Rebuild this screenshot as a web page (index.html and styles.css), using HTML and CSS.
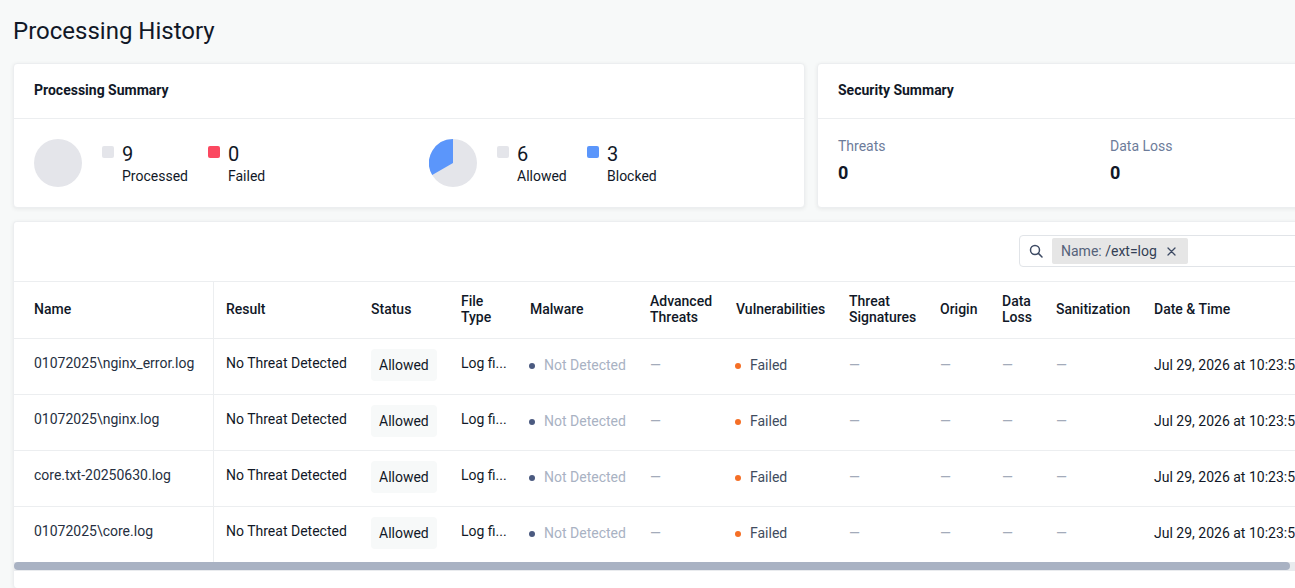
FILE: index.html
```html
<!DOCTYPE html>
<html lang="en">
<head>
  <meta charset="UTF-8" />
  <meta name="viewport" content="width=device-width, initial-scale=1" />
  <title>Processing History</title>
  <link rel="stylesheet" href="styles.css">
</head>
<body>
  <div class="page">
    <h1>Processing History</h1>

    <div class="summary-row">
      <section class="card">
        <h2 class="card-title">Processing Summary</h2>
        <div class="card-body">
          <div class="chart-group">
            <svg class="pie" width="48" height="48" viewBox="0 0 48 48"><circle cx="24" cy="24" r="24" fill="#e4e5ea"/></svg>
            <div class="legend">
              <div class="legend-item legend-processed">
                <span class="swatch swatch-grey"></span>
                <div><div class="legend-num">9</div><div class="legend-label">Processed</div></div>
              </div>
              <div class="legend-item">
                <span class="swatch swatch-red"></span>
                <div><div class="legend-num">0</div><div class="legend-label">Failed</div></div>
              </div>
            </div>
          </div>
          <div class="chart-group">
            <svg class="pie" width="48" height="48" viewBox="0 0 48 48">
              <circle cx="24" cy="24" r="24" fill="#e4e5ea"/>
              <path d="M24 24 L24 0 A24 24 0 0 0 3.2 36 Z" fill="#5b96fb"/>
            </svg>
            <div class="legend">
              <div class="legend-item legend-allowed">
                <span class="swatch swatch-grey"></span>
                <div><div class="legend-num">6</div><div class="legend-label">Allowed</div></div>
              </div>
              <div class="legend-item">
                <span class="swatch swatch-blue"></span>
                <div><div class="legend-num">3</div><div class="legend-label">Blocked</div></div>
              </div>
            </div>
          </div>
        </div>
      </section>

      <section class="card">
        <h2 class="card-title">Security Summary</h2>
        <div class="security-body">
          <div class="stat">
            <div class="stat-label">Threats</div>
            <div class="stat-value">0</div>
          </div>
          <div class="stat">
            <div class="stat-label">Data Loss</div>
            <div class="stat-value">0</div>
          </div>
        </div>
      </section>
    </div>

    <section class="card table-card">
      <div class="toolbar">
        <div class="search">
          <svg class="search-icon" width="14" height="14" viewBox="0 0 14 14" fill="none" stroke="#3d4a63" stroke-width="1.5" stroke-linecap="round">
            <circle cx="6" cy="6" r="4.5"/>
            <path d="M9.4 9.4 L13 13"/>
          </svg>
          <span class="chip">
            <span class="chip-key">Name:</span>&nbsp;<span class="chip-val">/ext=log</span>
            <svg class="chip-x" width="9" height="9" viewBox="0 0 9 9" stroke="#3d4a63" stroke-width="1.3" stroke-linecap="round"><path d="M1 1 L8 8 M8 1 L1 8"/></svg>
          </span>
        </div>
      </div>

      <table>
        <colgroup>
          <col class="c-name"><col class="c-result"><col class="c-status"><col class="c-type">
          <col class="c-malware"><col class="c-adv"><col class="c-vuln"><col class="c-sig">
          <col class="c-origin"><col class="c-loss"><col class="c-san"><col class="c-date">
        </colgroup>
        <thead>
          <tr>
            <th class="name-cell">Name</th>
            <th>Result</th>
            <th>Status</th>
            <th>File<br>Type</th>
            <th>Malware</th>
            <th>Advanced<br>Threats</th>
            <th>Vulnerabilities</th>
            <th>Threat<br>Signatures</th>
            <th>Origin</th>
            <th>Data<br>Loss</th>
            <th>Sanitization</th>
            <th>Date &amp; Time</th>
          </tr>
        </thead>
        <tbody id="rows">
          <tr>
            <td class="name-cell high">01072025\nginx_error.log</td>
            <td class="high">No Threat Detected</td>
            <td class="pill-cell"><span class="pill">Allowed</span></td>
            <td class="high">Log fi...</td>
            <td><span class="dot dot-navy"></span><span class="muted">Not Detected</span></td>
            <td class="dash">—</td>
            <td class="soft"><span class="dot dot-orange"></span>Failed</td>
            <td class="dash">—</td>
            <td class="dash">—</td>
            <td class="dash">—</td>
            <td class="dash">—</td>
            <td>Jul 29, 2026 at 10:23:51 AM</td>
          </tr>
          <tr>
            <td class="name-cell high">01072025\nginx.log</td>
            <td class="high">No Threat Detected</td>
            <td class="pill-cell"><span class="pill">Allowed</span></td>
            <td class="high">Log fi...</td>
            <td><span class="dot dot-navy"></span><span class="muted">Not Detected</span></td>
            <td class="dash">—</td>
            <td class="soft"><span class="dot dot-orange"></span>Failed</td>
            <td class="dash">—</td>
            <td class="dash">—</td>
            <td class="dash">—</td>
            <td class="dash">—</td>
            <td>Jul 29, 2026 at 10:23:51 AM</td>
          </tr>
          <tr>
            <td class="name-cell high">core.txt-20250630.log</td>
            <td class="high">No Threat Detected</td>
            <td class="pill-cell"><span class="pill">Allowed</span></td>
            <td class="high">Log fi...</td>
            <td><span class="dot dot-navy"></span><span class="muted">Not Detected</span></td>
            <td class="dash">—</td>
            <td class="soft"><span class="dot dot-orange"></span>Failed</td>
            <td class="dash">—</td>
            <td class="dash">—</td>
            <td class="dash">—</td>
            <td class="dash">—</td>
            <td>Jul 29, 2026 at 10:23:51 AM</td>
          </tr>
          <tr>
            <td class="name-cell high">01072025\core.log</td>
            <td class="high">No Threat Detected</td>
            <td class="pill-cell"><span class="pill">Allowed</span></td>
            <td class="high">Log fi...</td>
            <td><span class="dot dot-navy"></span><span class="muted">Not Detected</span></td>
            <td class="dash">—</td>
            <td class="soft"><span class="dot dot-orange"></span>Failed</td>
            <td class="dash">—</td>
            <td class="dash">—</td>
            <td class="dash">—</td>
            <td class="dash">—</td>
            <td>Jul 29, 2026 at 10:23:51 AM</td>
          </tr>
        </tbody>
      </table>

      <div class="scroll-track"><div class="scroll-thumb"></div></div>
    </section>
  </div>
</body>
</html>
```

FILE: styles.css
```css
* {
  box-sizing: border-box;
}

html, body {
  height: 588px;
  overflow: hidden;
}

body {
  margin: 0;
  font-family: Roboto, "Liberation Sans", sans-serif;
  font-size: 14px;
  color: #111827;
  background: #f7f9f9;
}

.page {
  width: 1400px;
  padding: 0 13px;
}

h1 {
  margin: 0;
  padding-top: 17px;
  height: 63px;
  font-size: 24px;
  line-height: 28px;
  font-weight: 400;
}

.summary-row {
  display: grid;
  grid-template-columns: 792px 1fr;
  gap: 12px;
}

.card {
  background: white;
  border: 1px solid #eceef0;
  border-radius: 4px;
  box-shadow: 0 1px 4px rgba(0, 0, 0, 0.07);
}

.card-title {
  margin: 0;
  height: 55px;
  padding: 17px 20px 0;
  border-bottom: 1px solid #eceef0;
  font-size: 14px;
  line-height: 18px;
  font-weight: 700;
}

.card-body {
  display: flex;
  height: 88px;
  padding: 20px 20px 0;
}

.chart-group {
  display: flex;
  flex: none;
  width: 395px;
}

.pie {
  display: block;
  margin-right: 20px;
}

.legend {
  display: flex;
  padding-top: 3px;
}

.legend-item {
  display: flex;
  gap: 8px;
  padding-top: 4px;
}

.legend-processed {
  margin-right: 20px;
}

.legend-allowed {
  width: 90px;
}

.swatch {
  width: 12px;
  height: 12px;
  border-radius: 2px;
  flex: none;
}

.swatch-grey {
  background: #e4e5ea;
}

.swatch-red {
  background: #fb4860;
}

.swatch-blue {
  background: #5b96fb;
}

.legend-num {
  font-size: 20px;
  line-height: 16px;
}

.legend-label {
  margin-top: 5px;
  line-height: 18px;
}

.security-body {
  display: flex;
  height: 88px;
  padding: 18px 20px 0;
}

.stat {
  width: 272px;
}

.stat-label {
  color: #6d7c9a;
  line-height: 18px;
}

.stat-value {
  margin-top: 8px;
  font-size: 18px;
  line-height: 20px;
  font-weight: 700;
}

.table-card {
  margin-top: 13px;
  height: 367px;
  border-bottom: none;
}

.toolbar {
  display: flex;
  justify-content: flex-end;
  height: 60px;
  padding: 13px 19px 0;
  border-bottom: 1px solid #eceef0;
}

.search {
  display: flex;
  align-items: center;
  width: 348px;
  height: 32px;
  padding-left: 9px;
  border: 1px solid #e1e4e8;
  border-radius: 4px;
}

.chip {
  display: flex;
  align-items: center;
  height: 26px;
  margin-left: 9px;
  padding: 0 9px;
  background: #e6e6e6;
  border-radius: 2px;
  color: #333f55;
}

.chip-key {
  color: #55627a;
}

.chip-x {
  margin-left: 10px;
  margin-right: 3px;
}

table {
  width: 100%;
  border-collapse: collapse;
  table-layout: fixed;
}

.c-name { width: 199px; }
.c-result { width: 146px; }
.c-status { width: 90px; }
.c-type { width: 69px; }
.c-malware { width: 120px; }
.c-adv { width: 86px; }
.c-vuln { width: 113px; }
.c-sig { width: 91px; }
.c-origin { width: 62px; }
.c-loss { width: 54px; }
.c-san { width: 98px; }

th, td {
  padding: 0 0 0 12px;
  text-align: left;
  white-space: nowrap;
  overflow: hidden;
  border-bottom: 1px solid #eceef0;
}

th {
  height: 56px;
  padding-bottom: 1px;
  font-size: 14px;
  line-height: 16px;
  font-weight: 500;
}

td {
  height: 56px;
  padding-bottom: 2px;
  line-height: 20px;
}

td.high {
  padding-bottom: 7px;
}

.name-cell {
  padding-left: 20px;
  border-right: 1px solid #eceef0;
}

.name-cell + th,
.name-cell + td {
  padding-left: 12.5px;
}

td.name-cell {
  color: #262f3f;
}

tbody tr:last-child td {
  border-bottom: none;
}

.pill {
  display: inline-block;
  height: 32px;
  padding: 0 8px;
  line-height: 32px;
  vertical-align: middle;
  background: #f7f9f9;
  border-radius: 4px;
}

.dot {
  display: inline-block;
  width: 6px;
  height: 6px;
  margin-left: -1px;
  margin-right: 9px;
  border-radius: 50%;
  vertical-align: 1px;
}

.dot-navy {
  background: #4b5a80;
}

.dot-orange {
  background: #f56f26;
}

.muted {
  color: #a9b2c3;
}

.soft {
  color: #414c60;
}

.dash {
  color: #a3abba;
}

.scroll-track {
  height: 9px;
  background: #e9ebee;
}

.scroll-thumb {
  width: 1276px;
  height: 8px;
  background: #a9b2c3;
  border-radius: 4px;
}
```
